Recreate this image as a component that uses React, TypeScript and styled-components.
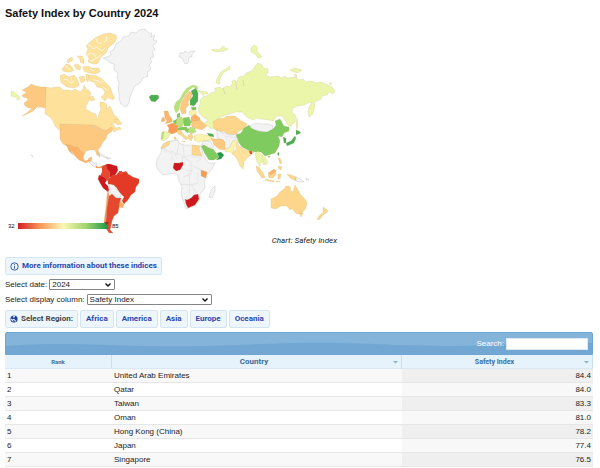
import React, { useState } from "react";
import styled, { createGlobalStyle } from "styled-components";

const GlobalStyle = createGlobalStyle`
  * { box-sizing: border-box; }
  body {
    margin: 0;
    background: #fff;
    color: #222;
    font: 8px/10px "Liberation Sans", Arial, sans-serif;
    overflow: hidden;
  }
`;

const Page = styled.main`
  padding: 6px 7px 0 5px;
`;

const Title = styled.h1`
  margin: 0;
  font-size: 11px;
  line-height: 14px;
  font-weight: 700;
  color: #111;
`;

const MapFigure = styled.figure`
  width: 332px;
  max-width: 100%;
  margin: 6px 0 0;
`;

const MapSvg = styled.svg`
  display: block;
  width: 100%;
  height: auto;
`;

const Caption = styled.figcaption`
  margin-top: 1px;
  text-align: right;
  font-family: Roboto, "Liberation Sans", sans-serif;
  font-style: italic;
  color: #222;
`;

const chip = `
  display: inline-flex;
  align-items: center;
  gap: 3px;
  height: 18px;
  border: 1px solid #d3e5f3;
  border-radius: 2px;
  background: #edf6fd;
  font: 700 8px/10px Roboto, "Liberation Sans", sans-serif;
  white-space: nowrap;
`;

const InfoLink = styled.a`
  ${chip}
  margin-top: 11px;
  padding: 0 4px;
  color: #2a48ad;
  text-decoration: none;
`;

const Field = styled.div<{ $gap: number }>`
  display: flex;
  align-items: center;
  gap: 2px;
  margin-top: ${(p) => p.$gap}px;
`;

const SelectBox = styled.span<{ $width: number }>`
  display: grid;
  grid-template-columns: 1fr 10px;
  align-items: center;
  width: ${(p) => p.$width}px;
  height: 11px;
  border: 1px solid #858585;
  border-radius: 1px;
  background: #fff;

  select {
    grid-area: 1 / 1 / 2 / 3;
    width: 100%;
    height: 9px;
    padding: 0 2px;
    border: 0;
    background: transparent;
    color: #222;
    font: 8px/9px "Liberation Sans", Arial, sans-serif;
    appearance: none;
  }
  svg {
    grid-area: 1 / 2 / 2 / 3;
    pointer-events: none;
  }
`;

const Regions = styled.nav`
  display: flex;
  gap: 2px;
  margin-top: 5px;
`;

const RegionLabel = styled.span`
  ${chip}
  padding: 0 4px;
  color: #444;
`;

const RegionLink = styled.a`
  ${chip}
  padding: 0 5px;
  color: #2a48ad;
  text-decoration: none;
`;

const Toolbar = styled.div`
  display: grid;
  align-items: center;
  height: 23px;
  margin-top: 4px;
  border: 1px solid #6fa5cf;
  border-radius: 2px 2px 0 0;
  background: #71a7d2;
  overflow: hidden;

  > * { grid-area: 1 / 1; }
`;

const Wave = styled.svg`
  width: 100%;
  height: 21px;
`;

const SearchLabel = styled.label`
  display: flex;
  align-items: center;
  justify-self: end;
  gap: 2px;
  padding-right: 4px;
  color: #fff;
`;

const SearchInput = styled.input`
  width: 82px;
  height: 12px;
  padding: 0 2px;
  border: 1px solid #dbe6ef;
  background: #fff;
  font: 8px/10px "Liberation Sans", Arial, sans-serif;
`;

const Table = styled.table`
  width: 100%;
  table-layout: fixed;
  border-collapse: separate;
  border-spacing: 0;
`;

const HeadCell = styled.th<{ $size: number }>`
  height: 14px;
  padding: 0 3px;
  border-right: 1px solid #c8dff0;
  border-bottom: 1px solid #d8e8f4;
  background: #e6f3fd;
  color: #3a6c9f;
  font-family: Roboto, "Liberation Sans", sans-serif;
  font-size: ${(p) => p.$size}px;
  line-height: 10px;
  font-weight: 700;
`;

const HeadInner = styled.div`
  display: flex;
  align-items: center;

  > span { flex: 1; text-align: center; }
`;

const Row = styled.tr`
  background: #fff;
  &:nth-child(odd) { background: #f8f8f8; }
  td:last-child { background: #f8f8f8; text-align: right; }
  &:nth-child(odd) td:last-child { background: #efefef; }
`;

const Cell = styled.td`
  height: 14px;
  padding: 0 2px;
  border-bottom: 1px solid #e6e6e6;
  line-height: 10px;
`;

const C = {
  none: "#f3f3f3",
  canada: "#fee29c",
  usa: "#fdc980",
  mexico: "#fdb469",
  sand: "#fdd68b",
  russia: "#ebf6ab",
  green: "#7fcb5f",
  deep: "#4aae53",
  dark: "#259a4b",
  lime: "#b8e27a",
  pale: "#fbf3ac",
  orange: "#fb9a54",
  red: "#e23a27",
  crimson: "#cf1720",
  argentina: "#e5482f",
};

const lands: [string, string][] = [
  // Greenland and Svalbard
  [C.none, "M107 57l4-2-1-3 4-3 2-5 5-3 2-4 6-1 2-4 5 1 3-3 6-1 4 4 3 0-1 4 4-2-2 5 4 1-4 5 2 4-3 2 2 5-4 1 2 4-3 3 2 4-4 3 1 4-5 2-3 5-5 3-3 6-2 5-1 6-2 3-2 1-4-3-2-5 0-6-1-6 1-4-2-5 1-5-4-3 0-6-4-1-3-3-4-2z"],
  [C.none, "M180 53l4 0 1-2 3 2 3-2 4 0-3 3 0 3-3 0-1 6-3 1-3-6-3-1z"],
  // Alaska
  [C.usa, "M46 87v20l3 1 4 4 3 5-3-1-4-5-4-3-5-1-2 1 2-3-4 3-3 3-8 4-3 1 6-4 4-4-4 0-1-1-2-1-1-3 4-3-1-2-4-1-1-2 4-2 0-1-4-2 4-2 3-2 2-2 5 2 5 1z"],
  // Canada mainland
  [C.canada, "M46 87l5 1 5-1 4 0 3 3 5 0 4 1 3-2 5 3 3-3 1-4 3 5 2 0 2 4-2 3 2 1-3 4-2 4 0 3 3 2 4 2 3 1 1 5 1 0 1-6 2-4-1-3 0-4 4 0 3 3 0 4 3-3 2 4 2 5 4 3 1 3-3 2-5 1 3 1 1 3 5-1 1 2-3 1-4 2-1-2-3 0-3 3-5 3 0-4-2 0-1 3-7-3-3-2-30 0-4-4-2-5-3-4-5-3z"],
  // Arctic islands
  [C.canada, "M89 43l6-5 8-4 7-1 6 2 1 3-3 5-6 5-2 5-5 4-3 6-1 1-4 0-5-2 1-4-3-4 2-5-2-3z"],
  [C.canada, "M83 67l5-1 4 2 7 0 1 4-5 2-6-1-5-2z"],
  [C.canada, "M62 69l4-5 4 1 4 5-3 2-5 0-3-1z"],
  [C.canada, "M77 56l5 0 2 4 0 4-4-2 0-3zM74 65l4-1 3 3-1 3-4-1zM67 60l5-3 1 3-5 3z"],
  [C.canada, "M60 76l4-2 5 3 5-2 4 5 1 6-5 2-7-1-6-4zM79 77l5-1 1 5-4 2zM86 74l4 1-2 7-2-2z"],
  [C.canada, "M92 75l5 1 5 3 4 4 4 4 3 8 2 3-3 2-4-3-3 4-4-4 2-1 2-4-3-4-5-1-3-5-4-1-2-5z"],
  [C.canada, "M89 97l4-1 2 4-4 1zM115 119l4 1 3 4-5 1z"],
  // United States
  [C.usa, "M60 124l35 1 3 2 5 3 4 0 4-3 2 2-2 3-4 3-1 4-3 3-2 4-3 4 2 4 0 3-3-2-2-5-5 0-4 1-2 4-3-5-5-2-4 0-5-2-4-2-3-5z"],
  // Mexico
  [C.mexico, "M67 145l4 0 4 2 3 0 4 5 2 2-1 4 2 3 3-1 1-2 3-1-1 4-3 1-2 1-7-3-4-4-3-4-3-4-2-2zM66 144l2 1 3 6 2 4-4-4z"],
  [C.none, "M89 162l3-1 1 2 4 0-1 4-3-1-2-2zM97 153l6 2 5 3-5-1zM107 158l4 0-1 1-3 0zM31 155l2 1 0 1z"],
  [C.orange, "M96 166l3 1 3-1 0 2-6 0z"],
  // South America
  [C.crimson, "M103 166l4-2 3 0 3 1 4 1 1 4-2 4-3 3-4 0-2-4-4-2z"],
  [C.argentina, "M102 166l4-1 1 4 3 3 0 4-2 5-4-3-4-2 2-4z"],
  [C.crimson, "M99 175l5 2 3 3-2 3 3 3 1 4-1 2-5-4-3-5-2-4z"],
  [C.red, "M108 179l5-4 3 0 3-3 5 0 2-1 2 3 5 3 6 2 0 4-3 4-1 5-4 3-3 5-4 4-2-3 2-4-4-4-4-6-4-2-4-1z"],
  [C.none, "M109 184l5 1 3 5 4 4 0 3-5 1-3-3-3-2z"],
  [C.orange, "M108 190l1 5 0 8-2 9-1 8 2 8 3 4-4-2-3-8 2-15 1-12z"],
  [C.argentina, "M109 196l3-2 4 4 5 0-1 5-1 5-1 5-4 3-2 5-1 5-1 4 3 3-4 0-3-5 0-8 1-12z"],
  [C.mexico, "M120 201l4 3-1 4-4-1z"],
  [C.argentina, "M107 229l3 1 3 3-4-1zM119 171l3 0 0 3-3-1z"],
  // Africa
  [C.none, "M163 144l7-3 8-1 1 3 5 2 8 0 9 1 2 8 3 6 3 3 6 0-3 6-6 7-2 5 1 7-5 6-1 7-5 5-8 3-3-9-2-6 1-7-4-8 0-4-4-2-5 1-6 1-4-4-3-5 1-7 4-6z"],
  [C.none, "M211 190l4-4 0 5-3 7-3-1z"],
  [C.sand, "M161 147l5-5 4-1-1 4-5 3-3 1z"],
  [C.sand, "M192 145l8 1-1 3 3 7-10-1z"],
  [C.crimson, "M174 163l5 0 4-1 0 3-3 5-4 1-3-3z"],
  [C.orange, "M201 170l6 2-1 6-5-2z"],
  [C.crimson, "M185 199l2 1 4-2 3-3 4-1 1 5-4 6-7 3-2-4z"],
  // Europe
  [C.deep, "M149 97l2-2 7 0 1 3-4 4-4-1z"],
  [C.lime, "M175 111l-1-4 2-5 4-3 3-6 4-5 6-3 4 1 1 3-5-2-5 4-5 7-3 6-1 6-3 3z"],
  [C.usa, "M182 114l-2-5 1-6 4-7 4-5 3 2-1 5-3 4 1 3-3 3 0 5z"],
  [C.deep, "M191 91l5-3 2 5 0 8-4 5-4-1 0-5 3-4z"],
  [C.green, "M191 107l5 0 0 3-4 0z"],
  [C.pale, "M189 111l6-1 2 3-5 3-3-2z"],
  [C.mexico, "M164 111l4 0 1 4 3 4 0 3-7 2 2-3-2-3zM162 118l2-1 1 4-4 1z"],
  [C.green, "M177 114l3-1 0 4-3 1zM173 121l4-2 0 5-3 0z"],
  [C.lime, "M177 118l5-1 2 5-2 5-5 0-1-5z"],
  [C.green, "M183 118l6-1 2 5-1 4-6 0z"],
  [C.orange, "M167 125l6-2 5 3-1 6-5 2-4-1 1-5z"],
  [C.russia, "M163 131l8 2-3 5-4 3-3-1z"],
  [C.lime, "M162 132l2 0-1 7-2 0z"],
  [C.green, "M177 128l5-1 5 0-1 3-8 0zM186 128l4 1-2 4-3-2z"],
  [C.sand, "M177 130l4 0 2 4 5 4-2 2-4-4-4-2zM174 137l2 0 0 3-2-1zM182 141l3 0 0 1z"],
  [C.mexico, "M191 117l4-3 5 4 0 3-9 1z"],
  [C.usa, "M191 122l9-2 4 3 3 3-5 4-4-1-6-2z"],
  [C.lime, "M190 127l5 1 1 4-5 2-3-3z"],
  [C.sand, "M188 135l4-1 1 3-2 4-3-3z"],
  [C.pale, "M194 136l5-2 6 1 6 1 1 4-8 1-6 1-4-2z"],
  // Russia
  [C.russia, "M197 90l4 1 6 1 1 2-5 0 1 3 4-2 4-3 3 0 0-4 5-1 2 2 4-3 4 1 2-3 0-3 3-1 1 3 3-6 5-1 2-3 6-2 3-5 3-3 4 2 1 3 5 1 0 4-3 2 5 2 8-1 4 2 3-2 2 2 9-1 3 3 4-1 3 3 6-1 4 2 6-1 4 2 6 3 3 4-2 3-4-2-2 3-5 1-1 3-4 2-3 2 1 3-2 8-4 3-1-5 1-5 3-5-4 1-4 2-6 1-5 2-1 4 4 4-1 6-4 4-3-1-3-5-3-4-5 0-4 5-4-1-8-1-5-1-3 2-5-2-6-6-6 0-7 2-8 3-3 2 2 4-2 3 1 4-9-2-5-5 3-3-5-3-4-4-1-4 2-5 0-4 4-4z"],
  [C.russia, "M216 83l1-5 4-6 9-6 0 3-7 4-3 6 0 5zM251 48l3-3 3 2 0 4 5 6-4 1-3-4-4-2zM211 50l5-1 3 1 4-4 2 2 3 1-4 2-7 1zM290 70l5-2 7 2-4 3-4-1zM294 74l3 1-1 3zM329 83l3 0-1 2zM11 91l3 1 5 4 1 3-2 1-3-3-4-1z"],
  [C.russia, "M297 118l1 7-1 5-1-6z"],
  // Middle East and Central Asia
  [C.sand, "M213 122l4-3 7-1 3-2 8 0 5 4 7 4-3 5-5 2-3 4-8-1-5-3-4 2-5-5z"],
  [C.none, "M217 130l5 2 8 3 8-1-2 5-4 3-2 5-5 2-1-8-7-3z"],
  [C.none, "M203 141l7 0 4 6-4 1-8-3z"],
  [C.usa, "M211 138l4 1 7 0 3 3 0 8-6-1-5-4z"],
  [C.green, "M201 146l3-1 5 3 4 1 4 5 2 3-5 3-5 0-4-6z"],
  [C.dark, "M217 153l4-1 3 3-3 4-5 1 3-3z"],
  [C.deep, "M207 133l6 1 1 3-5-1z"],
  // South and East Asia
  [C.pale, "M226 149l3-1 4-7 4-1 1 3-4 5-1 6-3-2-5 0z"],
  [C.canada, "M237 142l2 4 7 4 4 0 4-1 0 3-3 3-4 3-3 4-1 7-3-3-2-5-3-5-3-2 4-5z"],
  [C.argentina, "M249 151l3 0 0 3-2 0z"],
  [C.green, "M236 135l5-2 3-5 5-3 2 3 7 3 8 1 8-4 2-3-1-4 5-2 4 7 5 1 0 4-5 2-2 4-4-1 2 5-1 5-4 7-6 2-4 1-4-4-5 0-6-1-8-4-3-4z"],
  [C.none, "M250 126l6-3 5 1 7 0 5 2 0 3-6 3-8-1-6-2z"],
  [C.deep, "M283 137l3 1 0 5-2 0zM296 130l3 1 2 2-5 2zM286 143l5-2 4-5 1 2-2 5-7 3zM277 154l2-2 0 4z"],
  [C.russia, "M255 153l3-2 5 5 2 5-1 4-3-4-1 5-3-4-1-4z"],
  [C.russia, "M262 155l3 2 3 5-2 3-3-4z"],
  [C.green, "M268 156l2 0-1 2z"],
  [C.sand, "M256 166l3 1 4 6 2 5-3 0-5-7zM265 179l10 2-2 1-8-2zM277 181l3 1-4 0zM268 174l3 0 5-4 0 4-3 4-4 0zM278 174l3 0-1 5-2 0zM287 174l4 1 5 2 0 4-6-3zM278 158l2 0 2 5-2 1zM279 166l3 1-1 3-3-2z"],
  [C.mexico, "M268 173l6-4 2 2-5 4z"],
  [C.none, "M296 177l5 2 3 3-4 0-4-1zM306 178l3 2-3 0z"],
  // Australia and New Zealand
  [C.sand, "M271 199l6-3 3-4 4-3 2-3 3 0 2 2-1 2 3 2 2-7 3 5 2 4 4 4 3 4-1 6-4 5-5 1-3-3-2-2-2 1-3-4-6 0-5 3-5-1 0-5zM299 213l4 0-2 4zM323 207l3 2 2 2-3 3-2-1 0-3zM322 213l2 1-4 5-3 1 2-4z"],
];

const innerBorders =
  "M164 149l8 4v8m7-18-2 10 6 4m0-14 1 14 8-2m-9 0-1 7m1-5 8 5v12l-8 3m8-20h11m-11 8 10 5m-12 3 1 12 8-2v-10m-8 12-9-1m9 1-1 9m3-9 4 8m-25-51 8-4m-9 12 8 5m-3-1 2 5m18-26v7m-9 30 7 1m8-12-5 3m-31-17v8M221 132l9 10m-5-6 11 2";

const countries: [string, string][] = [
  ["United Arab Emirates", "84.4"],
  ["Qatar", "84.0"],
  ["Taiwan", "83.3"],
  ["Oman", "81.0"],
  ["Hong Kong (China)", "78.2"],
  ["Japan", "77.4"],
  ["Singapore", "76.5"],
];

const WorldMap = () => (
  <MapSvg viewBox="5 26 332 209" role="img" aria-label="World map of the Safety Index">
    <defs>
      <linearGradient id="scale">
        <stop offset="0" stopColor="#d22027" />
        <stop offset="0.25" stopColor="#f99858" />
        <stop offset="0.5" stopColor="#fdf7b4" />
        <stop offset="0.75" stopColor="#a2d66f" />
        <stop offset="1" stopColor="#1d9849" />
      </linearGradient>
    </defs>
    <g stroke="#b9a875" strokeOpacity="0.4" strokeWidth="0.5" strokeLinejoin="round">
      {lands.map(([fill, d]) => (
        <path key={d} d={d} fill={fill} stroke={fill === C.none ? "#888888" : undefined} />
      ))}
    </g>
    <path d={innerBorders} fill="none" stroke="#d8d8d8" strokeWidth="0.5" />
    <path
      d="M65 66l3 2 2 2M88 45l3 1 2 3 4-2 2 2 3 2 3-3M87 55l4-2 3 1 2 4 3-1 2-3M90 61l4-1 2-2M96 39l2 4 4 0M106 36l1 4-3 2M90 69l4 2M64 79l4 1 3 3 3-2M71 77l1 4M94 80l5 1 2 3M103 87l4 3M101 81l3 1"
      fill="none"
      stroke="#fff"
      strokeWidth="0.7"
    />
    <path d="M90 126l5 1 1 4M97 128l4 2M223 88l2 6M236 84l1 6M243 80l1 6" fill="none" stroke="#d5cfae" strokeWidth="0.8" />
    <rect x="18" y="223" width="90" height="6" fill="url(#scale)" />
    <path d="M104 222h5l-2 3z" fill="#8c3a2c" />
    <g fontFamily="Liberation Sans, Arial, sans-serif" fontSize="6" fill="#111">
      <text x="8" y="228">32</text>
      <text x="112" y="228">85</text>
    </g>
  </MapSvg>
);

const Chevron = () => (
  <svg width="8" height="8" viewBox="0 0 8 8" aria-hidden="true">
    <path d="M1.5 2.5L4 5l2.5-2.5" fill="none" stroke="#111" strokeWidth="1.4" />
  </svg>
);

const SortMark = () => (
  <svg width="5" height="4" viewBox="0 0 5 4" aria-hidden="true">
    <path d="M0 1h5L2.500 3.500z" fill="#8fb1cc" />
  </svg>
);

export default function App() {
  const [date, setDate] = useState("2024");
  const [column, setColumn] = useState("Safety Index");
  const [query, setQuery] = useState("");
  const rows = countries
    .map(([name, value], i) => ({ rank: i + 1, name, value }))
    .filter((r) => r.name.toLowerCase().includes(query.toLowerCase()));

  return (
    <>
      <GlobalStyle />
      <Page>
        <Title>Safety Index by Country 2024</Title>
        <MapFigure>
          <WorldMap />
          <Caption>Chart: Safety Index</Caption>
        </MapFigure>
        <InfoLink href="#indices">
          <svg width="9" height="9" viewBox="0 0 9 9" aria-hidden="true">
            <circle cx="4.5" cy="4.5" r="3.700" fill="none" stroke="#2a48ad" strokeWidth="0.9" />
            <path d="M4.500 4v2.700M4.500 2.200v1" stroke="#2a48ad" strokeWidth="0.9" />
          </svg>
          More information about these indices
        </InfoLink>
        <Field $gap={4}>
          <label htmlFor="date">Select date:</label>
          <SelectBox $width={66}>
            <select id="date" value={date} onChange={(e) => setDate(e.target.value)}>
              <option>2024</option>
              <option>2023</option>
            </select>
            <Chevron />
          </SelectBox>
        </Field>
        <Field $gap={4}>
          <label htmlFor="column">Select display column:</label>
          <SelectBox $width={125}>
            <select id="column" value={column} onChange={(e) => setColumn(e.target.value)}>
              <option>Safety Index</option>
            </select>
            <Chevron />
          </SelectBox>
        </Field>
        <Regions aria-label="Select Region">
          <RegionLabel>
            <svg width="8" height="8" viewBox="0 0 8 8" aria-hidden="true">
              <circle cx="4" cy="4" r="3.600" fill="#1f3f9c" />
              <path d="M3.200 0.800L5.200 1 4.600 2.300 3.400 2.700 3 3.800 4.800 4.200 5.200 5.300 6.300 5.800 5 7 4.500 5.600 1 3.600 0.900 4.800 2.500 6 3.200 7.200z" fill="#edf6fd" />
            </svg>
            Select Region:
          </RegionLabel>
          {["Africa", "America", "Asia", "Europe", "Oceania"].map((r) => (
            <RegionLink key={r} href={`#${r.toLowerCase()}`}>{r}</RegionLink>
          ))}
        </Regions>
        <Toolbar>
          <Wave viewBox="0 0 588 21" preserveAspectRatio="none" aria-hidden="true">
            <path d="M0 0H588V10C540 7 500 13 450 13C390 13 350 9 290 10C220 12 190 14 140 13C90 12 50 9 0 13z" fill="#84b4da" />
          </Wave>
          <SearchLabel>
            Search:
            <SearchInput type="search" value={query} onChange={(e) => setQuery(e.target.value)} />
          </SearchLabel>
        </Toolbar>
        <Table>
          <colgroup>
            <col width="18.2%" />
            <col width="49.300%" />
            <col />
          </colgroup>
          <thead>
            <tr>
              <HeadCell $size={6}>Rank</HeadCell>
              <HeadCell $size={8}><HeadInner><span>Country</span><SortMark /></HeadInner></HeadCell>
              <HeadCell $size={7}><HeadInner><span>Safety Index</span><SortMark /></HeadInner></HeadCell>
            </tr>
          </thead>
          <tbody>
            {rows.map((r) => (
              <Row key={r.rank}>
                <Cell>{r.rank}</Cell>
                <Cell>{r.name}</Cell>
                <Cell>{r.value}</Cell>
              </Row>
            ))}
          </tbody>
        </Table>
      </Page>
    </>
  );
}
